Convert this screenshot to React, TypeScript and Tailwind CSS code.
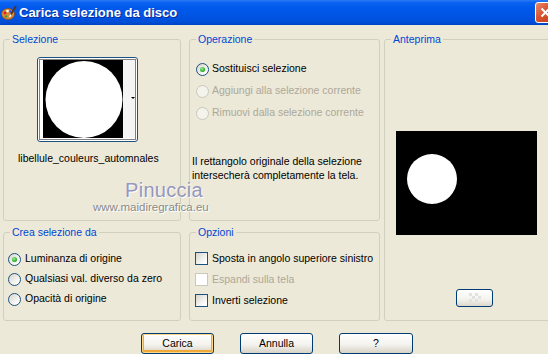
import React from "react";

const Radio = ({ checked = false, disabled = false }: { checked?: boolean; disabled?: boolean }) => (
  <span
    className={
      disabled
        ? "w-[13px] h-[13px] rounded-full border border-[#CAC8BB] bg-[#F4F3EC] flex items-center justify-center shrink-0"
        : "w-[13px] h-[13px] rounded-full border border-[#1C5180] bg-[linear-gradient(135deg,#D6D5CC_0%,#FFFFFF_85%)] flex items-center justify-center shrink-0"
    }
  >
    {checked && (
      <span className="w-[5px] h-[5px] rounded-full bg-[radial-gradient(circle_at_40%_35%,#9AF09A_0%,#2DB02D_60%,#1E8F1E_100%)]" />
    )}
  </span>
);

const Check = ({ disabled = false }: { disabled?: boolean }) => (
  <span
    className={
      disabled
        ? "w-[13px] h-[13px] border border-[#CAC8BB] bg-white shrink-0"
        : "w-[13px] h-[13px] border border-[#1C5180] bg-[linear-gradient(135deg,#D6D5CC_0%,#FFFFFF_85%)] shrink-0"
    }
  />
);

const Legend = ({ children }: { children: React.ReactNode }) => (
  <legend className="ml-[6px] px-[2px] leading-[13px] text-[#0046D5]">{children}</legend>
);

export default function App() {
  return (
    <div className="w-[548px] h-[354px] overflow-hidden relative bg-[#ECE9D8] font-['Liberation_Sans',Arial,sans-serif] text-[10.5px] text-black">
      {/* Title bar */}
      <div className="h-[25px] flex items-center bg-[linear-gradient(180deg,#2C7BF6_0%,#0A63F0_10%,#0058EA_35%,#0054E3_65%,#004ED8_88%,#0042C4_100%)] overflow-hidden">
        <svg width="16" height="16" viewBox="0 0 16 16" className="ml-[1px] shrink-0">
          <ellipse cx="7" cy="9" rx="6.5" ry="5.5" fill="#D98A3A" stroke="#8A4A18" strokeWidth="0.8" />
          <circle cx="4" cy="8" r="1.4" fill="#E02020" />
          <circle cx="6.5" cy="6" r="1.3" fill="#FFFFFF" />
          <circle cx="9.5" cy="6.5" r="1.2" fill="#2050E0" />
          <circle cx="5" cy="11.5" r="1.2" fill="#30A030" />
          <line x1="15" y1="1" x2="9" y2="11" stroke="#5A3010" strokeWidth="1.6" />
          <line x1="10" y1="9.5" x2="8.5" y2="12" stroke="#F0F0F0" strokeWidth="1.6" />
        </svg>
        <span className="ml-[2px] text-white font-bold text-[13px] leading-none [text-shadow:1px_1px_0_#0A2A9C]">
          Carica selezione da disco
        </span>
        <div className="ml-auto mr-[-8px] w-[21px] h-[21px] rounded-[3px] border border-white bg-[linear-gradient(135deg,#E98A6E_0%,#D8532F_45%,#C1391A_100%)] flex items-center justify-center shrink-0">
          <svg width="11" height="11" viewBox="0 0 11 11">
            <path d="M1.5 1.5 L9.5 9.5 M9.5 1.5 L1.5 9.5" stroke="#FFFFFF" strokeWidth="2" />
          </svg>
        </div>
      </div>

      {/* Body */}
      <div className="flex pl-[3px] pt-[8px]">
        {/* Left column */}
        <div className="w-[178px] flex flex-col gap-[5px] shrink-0">
          <fieldset className="h-[188px] border border-[#D0D0BF] rounded-[3px]">
            <Legend>Selezione</Legend>
            <div className="flex flex-col items-start">
              <div className="ml-[33px] mt-[11px] w-[101px] h-[85px] border border-[#1C5180] rounded-[3px] bg-white">
                <svg width="99" height="83" viewBox="0 0 99 83">
                  <rect x="1.5" y="1.5" width="96" height="80" fill="#FFFFFF" stroke="#000" strokeWidth="1" strokeDasharray="1 1" />
                  <rect x="84" y="2" width="13" height="78" fill="#F4F4F4" />
                  <rect x="5" y="2" width="80" height="78" fill="#000" />
                  <circle cx="46" cy="41.5" r="38.5" fill="#FFF" />
                  <path d="M93 39 L97 39 L95 41 Z" fill="#000" />
                </svg>
              </div>
              <div className="ml-[14px] mt-[10px] leading-[13px]">libellule_couleurs_automnales</div>
            </div>
          </fieldset>
          <fieldset className="h-[95px] border border-[#D0D0BF] rounded-[3px]">
            <Legend>Crea selezione da</Legend>
            <div className="pt-[10px] pl-[4px] flex flex-col">
              <div className="h-[20px] flex items-center gap-[4px]">
                <Radio checked />
                <span>Luminanza di origine</span>
              </div>
              <div className="h-[20px] flex items-center gap-[4px]">
                <Radio />
                <span>Qualsiasi val. diverso da zero</span>
              </div>
              <div className="h-[20px] flex items-center gap-[4px]">
                <Radio />
                <span>Opacità di origine</span>
              </div>
            </div>
          </fieldset>
        </div>

        {/* Middle column */}
        <div className="ml-[8px] w-[191px] flex flex-col gap-[5px] shrink-0">
          <fieldset className="h-[188px] border border-[#D0D0BF] rounded-[3px]">
            <Legend>Operazione</Legend>
            <div className="pt-[12px] pl-[6px] flex flex-col">
              <div className="h-[22px] flex items-center gap-[3px]">
                <Radio checked />
                <span>Sostituisci selezione</span>
              </div>
              <div className="h-[22px] flex items-center gap-[3px] text-[#ACA899]">
                <Radio disabled />
                <span>Aggiungi alla selezione corrente</span>
              </div>
              <div className="h-[22px] flex items-center gap-[3px] text-[#ACA899]">
                <Radio disabled />
                <span>Rimuovi dalla selezione corrente</span>
              </div>
            </div>
            <p className="mt-[31px] pl-[2px] leading-[13.5px]">
              Il rettangolo originale della selezione
              <br />
              intersecherà completamente la tela.
            </p>
          </fieldset>
          <fieldset className="h-[95px] border border-[#D0D0BF] rounded-[3px]">
            <Legend>Opzioni</Legend>
            <div className="pt-[9px] pl-[5px] flex flex-col">
              <div className="h-[21px] flex items-center gap-[4px]">
                <Check />
                <span>Sposta in angolo superiore sinistro</span>
              </div>
              <div className="h-[21px] flex items-center gap-[4px] text-[#ACA899]">
                <Check disabled />
                <span>Espandi sulla tela</span>
              </div>
              <div className="h-[21px] flex items-center gap-[4px]">
                <Check />
                <span>Inverti selezione</span>
              </div>
            </div>
          </fieldset>
        </div>

        {/* Right column */}
        <fieldset className="ml-[4px] w-[172px] h-[288px] border border-[#D0D0BF] rounded-[3px] shrink-0">
          <Legend>Anteprima</Legend>
          <div className="flex flex-col items-start">
            <div className="ml-[11px] mt-[85px] w-[141px] h-[104px] bg-black">
              <svg width="141" height="104" viewBox="0 0 141 104">
                <circle cx="36" cy="48" r="25" fill="#FFF" />
              </svg>
            </div>
            <div className="ml-[71px] mt-[54px] w-[37px] h-[18px] rounded-[3px] border border-[#003C74] bg-[linear-gradient(180deg,#FFFFFF_0%,#F3F2EC_60%,#DCD7CC_100%)] flex items-center justify-center">
              <svg width="18" height="10" viewBox="0 0 18 10">
                <rect x="3" y="0" width="3" height="3" fill="#E2E2E2" />
                <rect x="9" y="0" width="3" height="3" fill="#E2E2E2" />
                <rect x="6" y="3" width="3" height="3" fill="#E2E2E2" />
                <rect x="12" y="3" width="3" height="3" fill="#E2E2E2" />
                <rect x="3" y="6" width="3" height="3" fill="#E2E2E2" />
                <rect x="9" y="6" width="3" height="3" fill="#E2E2E2" />
              </svg>
            </div>
          </div>
        </fieldset>
      </div>

      {/* Buttons */}
      <div className="flex mt-[12px] ml-[141px] gap-[26px]">
        <button className="w-[73px] h-[21px] rounded-[3px] border border-[#003C74] bg-[linear-gradient(180deg,#FFFFFF_0%,#F4F3EE_55%,#D8D2C6_100%)] [box-shadow:inset_0_0_0_1px_#FCD888,inset_0_-1px_0_2px_#EEA939] flex items-center justify-center leading-none">
          Carica
        </button>
        <button className="w-[73px] h-[21px] rounded-[3px] border border-[#003C74] bg-[linear-gradient(180deg,#FFFFFF_0%,#F4F3EE_55%,#D8D2C6_100%)] flex items-center justify-center leading-none">
          Annulla
        </button>
        <button className="w-[74px] h-[21px] rounded-[3px] border border-[#003C74] bg-[linear-gradient(180deg,#FFFFFF_0%,#F4F3EE_55%,#D8D2C6_100%)] flex items-center justify-center leading-none">
          ?
        </button>
      </div>

      {/* Watermark */}
      <div className="absolute left-[125px] top-[180px] h-[20px] text-[20px] leading-[20px] tracking-[0.3px] text-[#9597BE] [text-shadow:1px_1px_0_#FFFFFF] pointer-events-none">
        Pinuccia
      </div>
      <div className="absolute left-[93px] top-[201px] text-[11.5px] leading-[12px] text-[#8A8A8A] [text-shadow:1px_1px_0_#FFFFFF] pointer-events-none">
        www.maidiregrafica.eu
      </div>
    </div>
  );
}
